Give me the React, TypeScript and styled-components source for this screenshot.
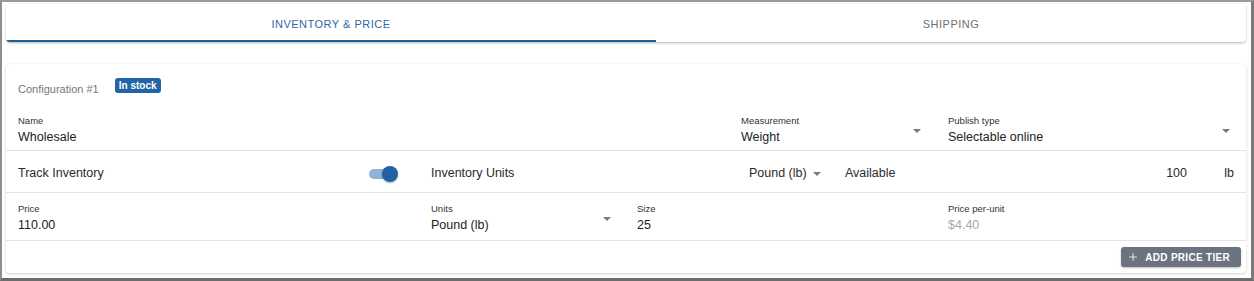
import styled, { createGlobalStyle } from 'styled-components';
import { Plus } from 'lucide-react';

const Global = createGlobalStyle`
  html, body {
    margin: 0;
    padding: 0;
    background: #fff;
  }
  * { box-sizing: border-box; }
  body {
    font-family: "Liberation Sans", Arial, sans-serif;
    color: #222;
  }
`

const Frame = styled.div`
  width: 1254px;
  height: 281px;
  border-top: 2px solid #9b9b9b;
  border-left: 2px solid #8e8e8e;
  border-right: 3px solid #7a7a7a;
  border-bottom: 3px solid #6c6c6c;
  padding: 2px 5px 0 4px;
  background: #fff;
`

const TabBar = styled.div`
  display: flex;
  height: 38px;
  background: #fff;
  border-radius: 4px;
  box-shadow: 0 1px 3px rgba(0, 0, 0, 0.22), 0 1px 1px rgba(0, 0, 0, 0.08);
  overflow: hidden;
`

const Tab = styled.div<{ $active?: boolean; $width?: number }>`
  position: relative;
  flex: ${p => (p.$width ? `0 0 ${p.$width}px` : '1')};
  display: flex;
  align-items: center;
  justify-content: center;
  padding-top: 1px;
  font-size: 11px;
  letter-spacing: 0.5px;
  text-transform: uppercase;
  color: ${p => (p.$active ? '#2f68a3' : '#6f6f6f')};

  &::after {
    content: '';
    position: absolute;
    left: 0;
    right: 0;
    bottom: 0;
    height: 2px;
    background: ${p => (p.$active ? '#1f5c9b' : 'transparent')};
  }
`

const Card = styled.div`
  margin-top: 22px;
  height: 209px;
  background: #fff;
  border-radius: 4px;
  box-shadow: 0 1px 3px rgba(0, 0, 0, 0.18), 0 0 1px rgba(0, 0, 0, 0.06);
  padding-top: 14px;
`

const Header = styled.div`
  display: flex;
  align-items: flex-start;
  gap: 16px;
  padding: 0 12px;
  height: 15px;
`

const ConfigTitle = styled.span`
  font-size: 11px;
  line-height: 11px;
  margin-top: 6px;
  color: #777;
`

const Badge = styled.span`
  background: #2264a6;
  color: #fff;
  font-size: 10px;
  font-weight: 700;
  line-height: 15px;
  height: 15px;
  padding: 0 4px;
  border-radius: 3px;
`

const Row = styled.div<{ $cols: string; $top: number; $bottom: number }>`
  display: grid;
  grid-template-columns: ${p => p.$cols};
  align-items: center;
  padding: ${p => `${p.$top}px 12px ${p.$bottom}px`};
  border-bottom: 1px solid #e4e4e4;
`

const Field = styled.div<{ $width?: number }>`
  position: relative;
  width: ${p => (p.$width ? `${p.$width}px` : 'auto')};
  display: flex;
  flex-direction: column;
`

const Label = styled.span`
  font-size: 9.5px;
  line-height: 12px;
  color: #333;
`

const Value = styled.span<{ $muted?: boolean }>`
  font-size: 12.5px;
  line-height: 16px;
  margin-top: 2px;
  color: ${p => (p.$muted ? '#a9a9a9' : '#222')};
`

const Arrow = styled.span`
  display: inline-block;
  width: 0;
  height: 0;
  border-left: 4px solid transparent;
  border-right: 4px solid transparent;
  border-top: 4px solid #7a7a7a;
`

const SelectArrow = styled(Arrow)`
  position: absolute;
  right: 4px;
  top: 14px;
`

const Text = styled.span<{ $align?: string }>`
  font-size: 12.5px;
  line-height: 17px;
  color: #2a2a2a;
  text-align: ${p => p.$align || 'left'};
`

const TrackCell = styled.div`
  display: flex;
  align-items: center;
  justify-content: space-between;
  padding-right: 33px;
`

const Switch = styled.span`
  position: relative;
  width: 29px;
  height: 16px;
  display: inline-flex;
  align-items: center;

  &::before {
    content: '';
    width: 26px;
    height: 10px;
    border-radius: 5px;
    background: #8fb2d6;
  }
  &::after {
    content: '';
    position: absolute;
    right: 0;
    top: 0;
    width: 16px;
    height: 16px;
    border-radius: 50%;
    background: #2162a3;
    box-shadow: 0 1px 2px rgba(0, 0, 0, 0.3);
  }
`

const UnitPicker = styled.span`
  display: flex;
  align-items: center;
  gap: 6px;
`

const AvailableCell = styled.div`
  display: flex;
  justify-content: space-between;
  padding-right: 1px;
`

const Actions = styled.div`
  display: flex;
  justify-content: flex-end;
  padding: 6px 5px 0 0;
`

const Button = styled.button`
  display: flex;
  align-items: center;
  gap: 6px;
  height: 20px;
  padding: 0 11px 0 6px;
  border: none;
  border-radius: 3px;
  background: #6b7280;
  color: #fff;
  font-family: "Liberation Sans", Arial, sans-serif;
  font-size: 10px;
  font-weight: 700;
  letter-spacing: 0.3px;
  box-shadow: 0 1px 2px rgba(0, 0, 0, 0.25);
`

export default function App() {
  return (
    <Frame>
      <Global />
      <TabBar>
        <Tab $active $width={650}>Inventory &amp; Price</Tab>
        <Tab>Shipping</Tab>
      </TabBar>

      <Card>
        <Header>
          <ConfigTitle>Configuration #1</ConfigTitle>
          <Badge>In stock</Badge>
        </Header>

        <Row $cols="723px 207px 1fr" $top={22} $bottom={5}>
          <Field>
            <Label>Name</Label>
            <Value>Wholesale</Value>
          </Field>
          <Field $width={184}>
            <Label>Measurement</Label>
            <Value>Weight</Value>
            <SelectArrow />
          </Field>
          <Field>
            <Label>Publish type</Label>
            <Value>Selectable online</Value>
            <SelectArrow />
          </Field>
        </Row>

        <Row $cols="413px 318px 96px 1fr 46px" $top={14} $bottom={10}>
          <TrackCell>
            <Text>Track Inventory</Text>
            <Switch />
          </TrackCell>
          <Text>Inventory Units</Text>
          <UnitPicker>
            <Text>Pound (lb)</Text>
            <Arrow />
          </UnitPicker>
          <AvailableCell>
            <Text>Available</Text>
            <Text $align="right">100</Text>
          </AvailableCell>
          <Text $align="right">lb</Text>
        </Row>

        <Row $cols="413px 206px 311px 1fr" $top={10} $bottom={7}>
          <Field>
            <Label>Price</Label>
            <Value>110.00</Value>
          </Field>
          <Field $width={184}>
            <Label>Units</Label>
            <Value>Pound (lb)</Value>
            <SelectArrow />
          </Field>
          <Field>
            <Label>Size</Label>
            <Value>25</Value>
          </Field>
          <Field>
            <Label>Price per-unit</Label>
            <Value $muted>$4.40</Value>
          </Field>
        </Row>

        <Actions>
          <Button>
            <Plus size={12} strokeWidth={1.6} />
            ADD PRICE TIER
          </Button>
        </Actions>
      </Card>
    </Frame>
  );
}
